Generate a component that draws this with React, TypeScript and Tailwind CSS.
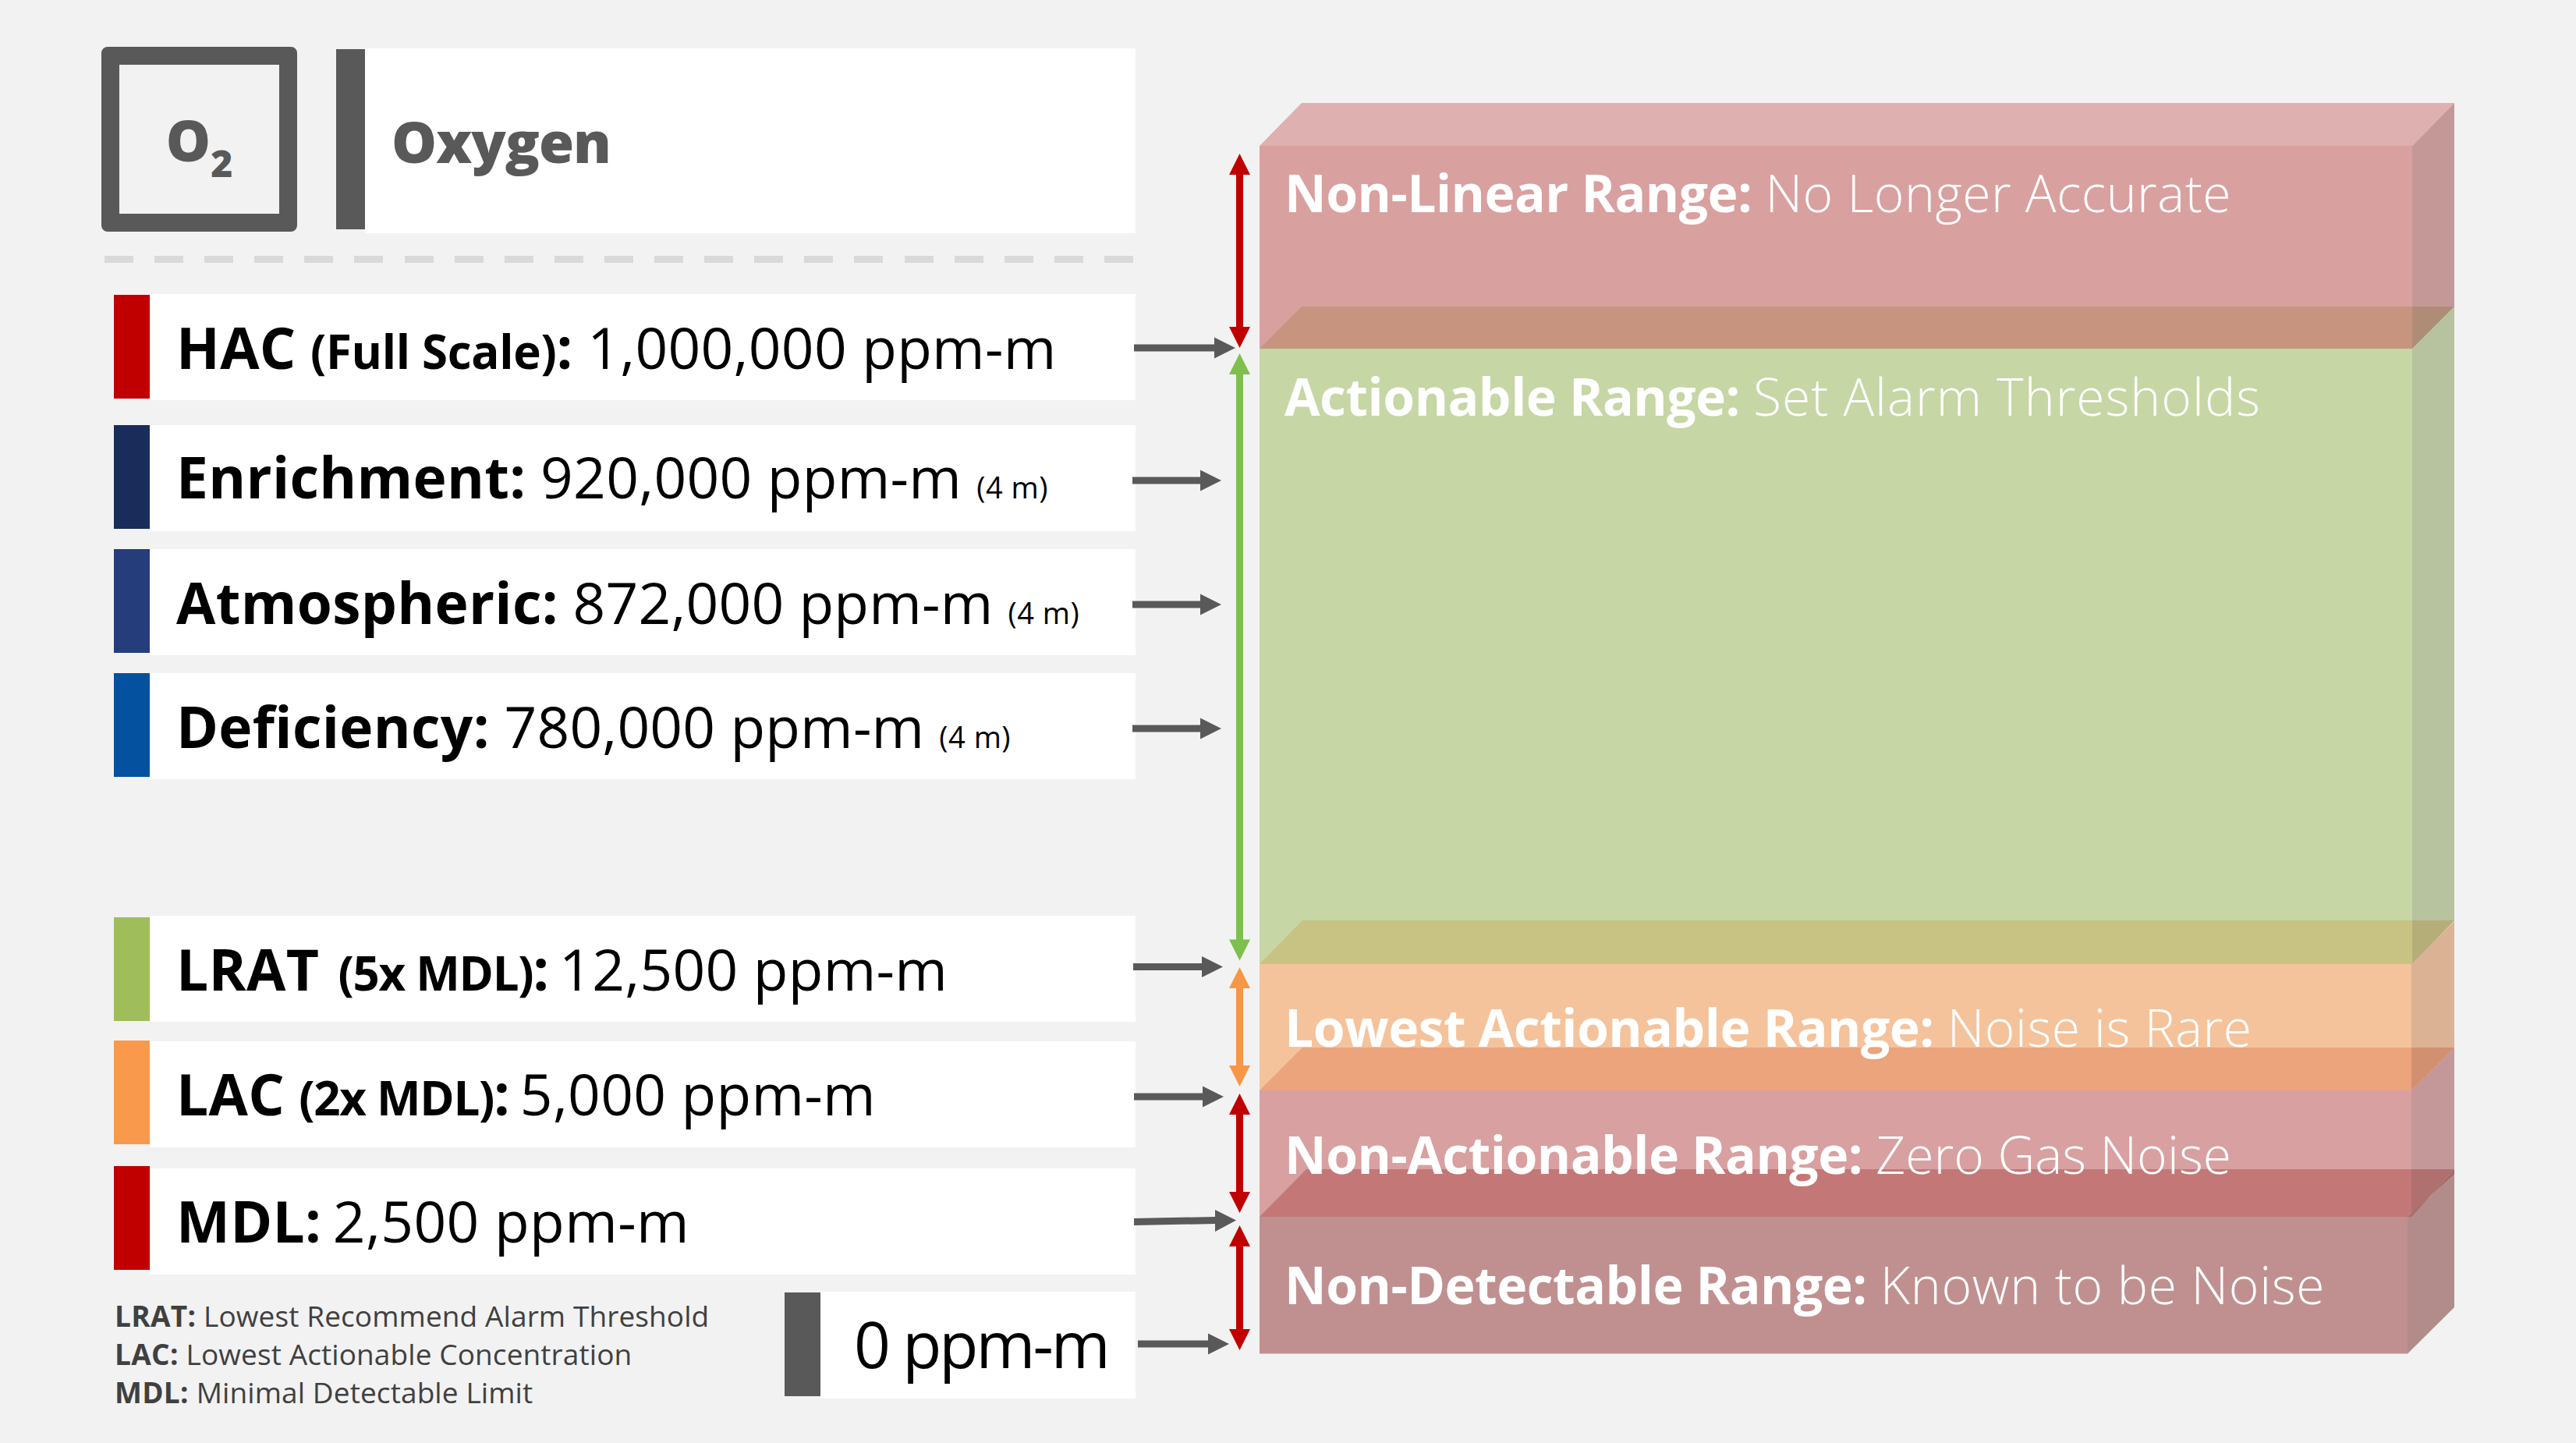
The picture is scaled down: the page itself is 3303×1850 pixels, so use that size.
import React from 'react';

const rows = [
  {
    name: 'HAC',
    note: '(Full Scale)',
    noteFit: 'ml-[3px] tracking-[-0.3px]',
    value: '1,000,000 ppm-m',
    valueFit: 'tracking-[0.3px]',
    range: '',
    bar: 'bg-[#c00000] mt-px',
    wrap: 'mt-[40px]',
    text: 'pt-[31px]',
  },
  {
    name: 'Enrichment',
    note: '',
    noteFit: '',
    value: '920,000 ppm-m',
    valueFit: 'tracking-[0.3px]',
    range: '(4 m)',
    bar: 'bg-[#1a2d5a]',
    wrap: 'mt-[32px]',
    text: 'pt-[29px]',
  },
  {
    name: 'Atmospheric',
    note: '',
    noteFit: '',
    value: '872,000 ppm-m',
    valueFit: 'tracking-[0.2px]',
    range: '(4 m)',
    bar: 'bg-[#253d7b]',
    wrap: 'mt-[23px]',
    text: 'pt-[31px]',
  },
  {
    name: 'Deficiency',
    note: '',
    noteFit: '',
    value: '780,000 ppm-m',
    valueFit: 'tracking-[0.2px]',
    range: '(4 m)',
    bar: 'bg-[#04529f]',
    wrap: 'mt-[23px]',
    text: 'pt-[31px]',
  },
  {
    name: 'LRAT',
    note: '(5x MDL)',
    noteFit: 'ml-[10px] tracking-[-1.3px]',
    value: '12,500 ppm-m',
    valueFit: '-ml-[6px] tracking-[0.3px]',
    range: '',
    bar: 'bg-[#9fbe5b] mt-[2px]',
    wrap: 'mt-[175px]',
    text: 'pt-[31px]',
  },
  {
    name: 'LAC',
    note: '(2x MDL)',
    noteFit: 'ml-[4px] tracking-[-1.3px]',
    value: '5,000 ppm-m',
    valueFit: '-ml-[6px] tracking-[0.3px]',
    range: '',
    bar: 'bg-[#f9994b] -mt-px',
    wrap: 'mt-[25px]',
    text: 'pt-[30px]',
  },
  {
    name: 'MDL',
    note: '',
    noteFit: '',
    value: '2,500 ppm-m',
    valueFit: '-ml-[4px] tracking-[0.4px]',
    range: '',
    bar: 'bg-[#c00000] -mt-[3px]',
    wrap: 'mt-[27px]',
    text: 'pt-[30px]',
  },
];

const legend = [
  ['LRAT:', 'Lowest Recommend Alarm Threshold'],
  ['LAC:', 'Lowest Actionable Concentration'],
  ['MDL:', 'Minimal Detectable Limit'],
];

const ranges = [
  { label: 'Non-Linear Range:', text: 'No Longer Accurate', fit: 'tracking-[0.5px]', place: 'top-[213px]' },
  { label: 'Actionable Range:', text: 'Set Alarm Thresholds', fit: 'tracking-[1px]', place: 'top-[474px]' },
  { label: 'Lowest Actionable Range:', text: 'Noise is Rare', fit: 'tracking-[0.5px]', place: 'top-[1283px]' },
  { label: 'Non-Actionable Range:', text: 'Zero Gas Noise', fit: 'tracking-[0.1px]', place: 'top-[1446px]' },
  { label: 'Non-Detectable Range:', text: 'Known to be Noise', fit: 'tracking-[0.7px]', place: 'top-[1613px]' },
];

function VArrow({ y1, y2, color }: { y1: number; y2: number; color: string }) {
  const x = 1589.5;
  const points = [
    [x, y1],
    [x + 13.5, y1 + 27],
    [x + 4.5, y1 + 27],
    [x + 4.5, y2 - 27],
    [x + 13.5, y2 - 27],
    [x, y2],
    [x - 13.5, y2 - 27],
    [x - 4.5, y2 - 27],
    [x - 4.5, y1 + 27],
    [x - 13.5, y1 + 27],
  ];
  return <polygon points={points.map((p) => p.join(',')).join(' ')} fill={color} />;
}

function HArrow({ x1, x2, y }: { x1: number; x2: number; y: number }) {
  const base = x2 - 27;
  return (
    <polygon
      points={`${x1},${y - 4.5} ${base},${y - 4.5} ${base},${y - 13.5} ${x2},${y} ${base},${y + 13.5} ${base},${y + 4.5} ${x1},${y + 4.5}`}
      fill="#595959"
    />
  );
}

function Stack() {
  return (
    <svg viewBox="1452 0 1851 1850" className="block h-[1850px] w-[1851px]">
      {/* non-linear */}
      <polygon points="1615,187 1669,132 3147,132 3093,187" fill="#dfb0b0" />
      <rect x="1615" y="187" width="1478" height="260" fill="#d9a0a0" />
      <polygon points="3093,187 3147,132 3147,393 3093,447" fill="#c59898" />
      <polygon points="1615,447 1669,393 3147,393 3093,447" fill="#c7957f" />
      <polygon points="3093,393 3147,393 3093,447" fill="#af8c75" />

      {/* actionable */}
      <rect x="1615" y="447" width="1478" height="789" fill="#c6d6a5" />
      <polygon points="3093,447 3147,393 3147,1180 3093,1236" fill="#b7c29f" />
      <polygon points="1615,1236 1670,1180 3147,1180 3093,1236" fill="#c8c383" />
      <polygon points="3093,1180 3147,1180 3093,1236" fill="#b6ae79" />

      {/* lowest actionable */}
      <rect x="1615" y="1236" width="1477" height="162" fill="#f4c39c" />
      <polygon points="3092,1236 3147,1181 3147,1343 3092,1398" fill="#dcb294" />
      <polygon points="1615,1398 1670,1343 3147,1343 3092,1398" fill="#eba47c" />
      <polygon points="3092,1343 3147,1343 3092,1398" fill="#d19070" />

      {/* non-actionable */}
      <rect x="1615" y="1398" width="1477" height="162" fill="#d8a0a0" />
      <polygon points="3092,1398 3147,1343 3147,1499 3092,1560" fill="#c49898" />
      <polygon points="1615,1560 1675,1499 3147,1499 3087,1560" fill="#c47777" />
      <polygon points="3092,1499 3147,1499 3092,1560" fill="#b07070" />

      {/* non-detectable */}
      <rect x="1615" y="1560" width="1472" height="175.5" fill="#c09090" />
      <polygon points="3087,1560 3147,1506 3147,1676 3087,1735.5" fill="#b28c8a" />
      <polygon points="3087,1560 3092,1560 3147,1499 3147,1506" fill="#a86a6a" />

      <VArrow y1={197} y2={446} color="#c00000" />
      <VArrow y1={453} y2={1231.5} color="#7ebf4d" />
      <VArrow y1={1240} y2={1393} color="#f79646" />
      <VArrow y1={1402} y2={1555} color="#c00000" />
      <VArrow y1={1571} y2={1731} color="#c00000" />

      <HArrow x1={1454} x2={1584} y={446} />
      <HArrow x1={1452} x2={1566} y={616} />
      <HArrow x1={1452} x2={1566} y={775} />
      <HArrow x1={1452} x2={1566} y={934} />
      <HArrow x1={1453} x2={1568} y={1239.5} />
      <HArrow x1={1454} x2={1569} y={1406} />
      <polygon
        points="1454,1562 1558,1560 1558,1551 1585,1564.5 1558,1579 1558,1569 1454,1571"
        fill="#595959"
      />
      <HArrow x1={1459} x2={1576} y={1723} />
    </svg>
  );
}

export default function App() {
  return (
    <div className="flex h-[1850px] w-[3303px] overflow-hidden bg-[#f2f2f2] font-['Open_Sans',sans-serif] leading-none">
      <div className="w-[1456px] shrink-0 pt-[60px]">
        <div className="ml-[130px] flex items-start">
          <div className="h-[237px] w-[251px] rounded-[8px] border-[23px] border-[#595959] pt-[60px] text-center text-[72px] font-extrabold text-[#595959]">
            O<span className="align-[-20px] text-[48px]">2</span>
          </div>
          <div className="ml-[50px] mt-[3px] h-[231px] w-[37px] bg-[#595959]" />
          <div className="mt-[2px] h-[237px] flex-1 bg-white pl-[34px] pt-[82px] text-[73px] font-extrabold tracking-[-1px] text-[#595959]">
            Oxygen
          </div>
        </div>

        <div className="ml-[134px] mt-[29px] flex w-[1319px] justify-between">
          {Array.from({ length: 21 }).map((_, i) => (
            <span key={i} className="h-[9px] w-[37px] bg-[#d9d9d9]" />
          ))}
        </div>

        {rows.map((row) => (
          <div key={row.name} className={`ml-[146px] flex h-[136px] items-start ${row.wrap}`}>
            <div className={`h-[133px] w-[46px] shrink-0 ${row.bar}`} />
            <div className="h-full flex-1 bg-white pl-[34px]">
              <div className={`whitespace-pre text-[73px] text-black ${row.text}`}>
                <span className="font-bold tracking-[0.3px]">{row.name}</span>
                {row.note && <span className={`text-[60px] font-bold ${row.noteFit}`}> {row.note}</span>}
                <span className="font-bold">:</span> <span className={row.valueFit}>{row.value}</span> {row.range && <span className="text-[38px] tracking-[0.5px]">{row.range}</span>}
              </div>
            </div>
          </div>
        ))}

        <div className="ml-[147px] mt-[22px] flex items-start">
          <div className="mt-[6px] w-[859px] text-[37px] leading-[49px] tracking-[0.1px] text-[#404040]">
            {legend.map(([term, meaning]) => (
              <p key={term}>
                <span className="font-bold tracking-[0.3px]">{term}</span> {meaning}
              </p>
            ))}
          </div>
          <div className="mt-px h-[133px] w-[46px] shrink-0 bg-[#595959]" />
          <div className="h-[137px] flex-1 bg-white pl-[43px] pt-[25px] text-[82px] tracking-[-3px] text-black">
            0 ppm-m
          </div>
        </div>
      </div>

      <div className="relative -ml-[4px] shrink-0">
        <Stack />
        {ranges.map((range) => (
          <div
            key={range.label}
            className={`absolute left-[195px] whitespace-nowrap text-[66px] text-white ${range.place}`}
          >
            <span className="font-bold tracking-[-0.5px]">{range.label}</span>{' '}
            <span className={`font-light ${range.fit}`}>{range.text}</span>
          </div>
        ))}
      </div>
    </div>
  );
}
